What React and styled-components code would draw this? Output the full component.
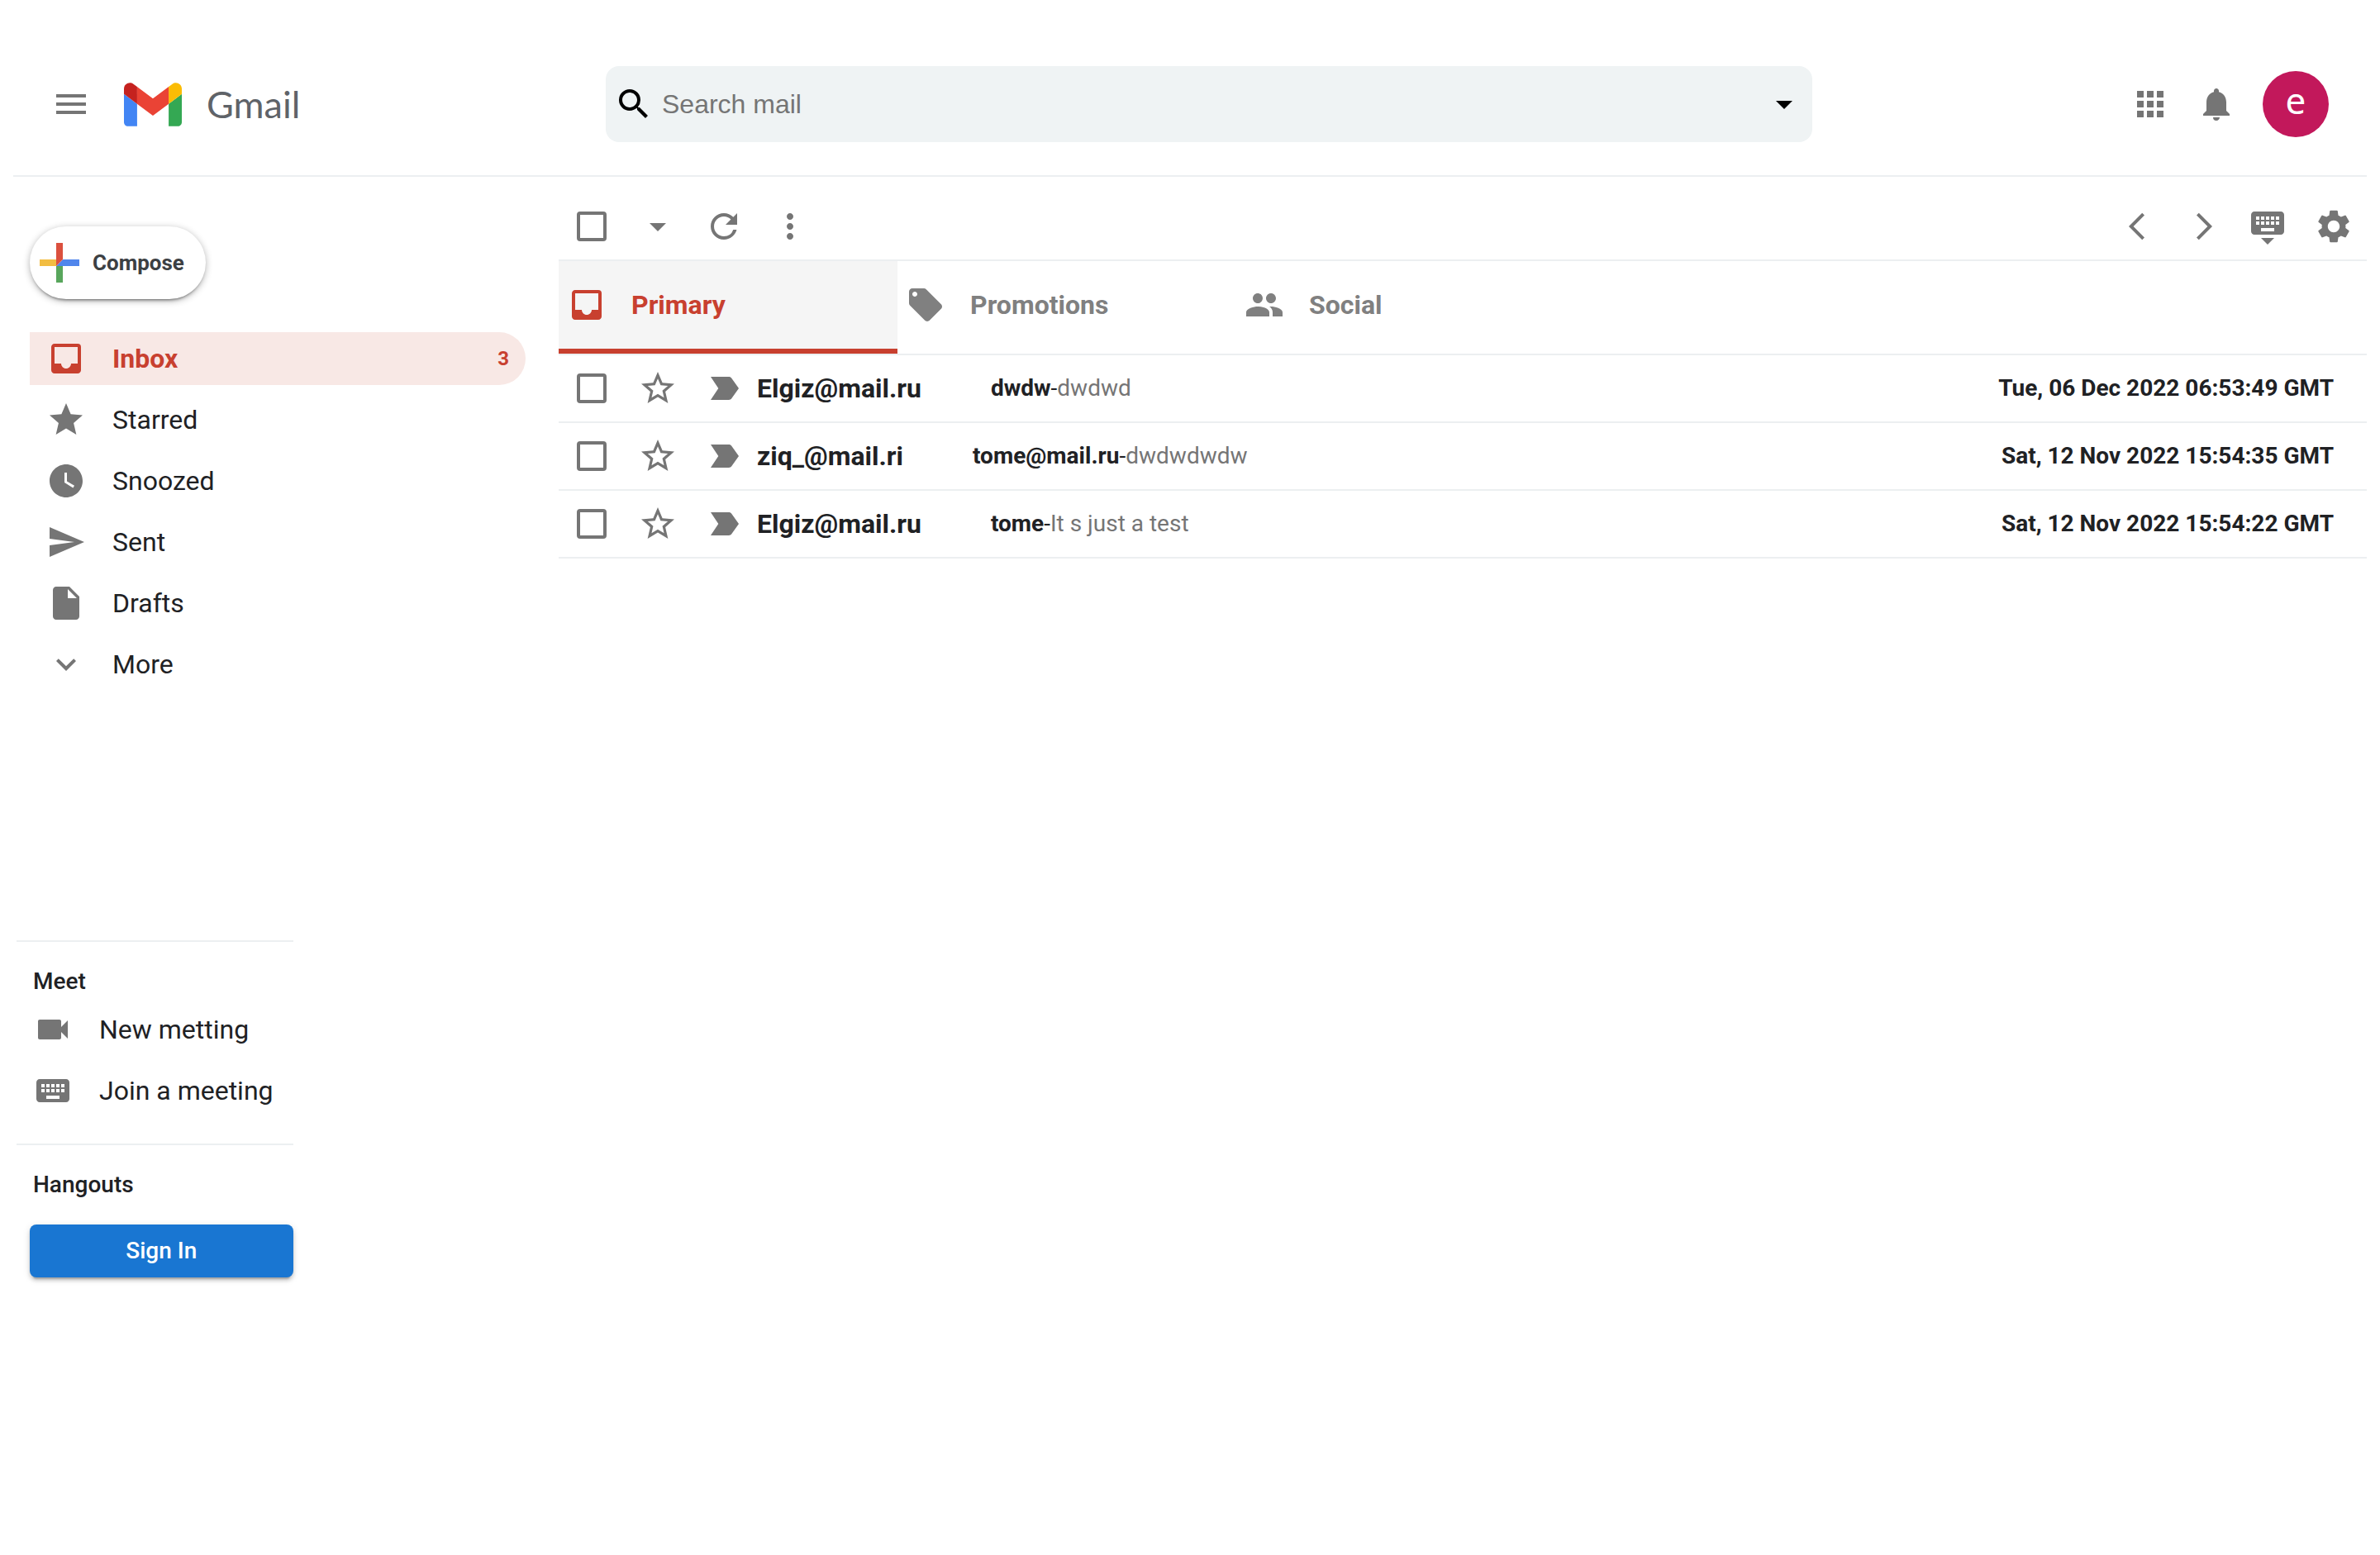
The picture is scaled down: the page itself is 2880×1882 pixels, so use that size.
import React from "react";
import styled, { createGlobalStyle } from "styled-components";
import {
  MdMenu, MdSearch, MdArrowDropDown, MdApps, MdNotifications, MdInbox, MdStar, MdWatchLater,
  MdSend, MdInsertDriveFile, MdExpandMore, MdVideocam, MdKeyboard, MdKeyboardHide, MdSettings,
  MdRefresh, MdMoreVert, MdLocalOffer, MdPeople, MdStarBorder,
} from "react-icons/md";

const red = "#c8402f";
const ink = "#202124";
const grey = "#757575";
const line = "#eceff1";

const GlobalStyle = createGlobalStyle`
  * { box-sizing: border-box; }
  body {
    margin: 0 16px;
    background: #fff;
    color: ${ink};
    font-family: Roboto, "Liberation Sans", sans-serif;
  }
  button, input { font-family: inherit; }
  svg { display: block; flex: none; }
`;

const Header = styled.header`
  display: flex;
  align-items: center;
  padding: 70px 30px 30px;
  border-bottom: 2px solid ${line};
`;

const Brand = styled.div`
  display: flex;
  align-items: center;
  flex: 0 0 318px;
`;

const Logo = styled.a`
  display: flex;
  align-items: center;
  gap: 30px;
  padding-left: 24px;
  color: #5f6368;
  font: 400 45px/52px Lato, sans-serif;
  text-decoration: none;
`;

const SearchBar = styled.form`
  display: flex;
  align-items: center;
  gap: 10px;
  flex: 1;
  min-width: 0;
  margin: 0 369px;
  padding: 22px 10px;
  border-radius: 16px;
  background: #eff3f4;
  color: #000;
`;

const SearchInput = styled.input`
  flex: 1;
  min-width: 0;
  padding: 0;
  border: none;
  outline: none;
  background: transparent;
  font: 400 32px/48px "Liberation Sans", Arial, sans-serif;
  &::placeholder { color: #757575; opacity: 1; }
`;

const BareButton = styled.button`
  display: flex;
  padding: 0;
  border: none;
  background: none;
  color: inherit;
  cursor: pointer;
`;

const IconButton = styled.button`
  display: flex;
  flex: none;
  padding: 16px;
  border: none;
  border-radius: 50%;
  background: none;
  color: ${grey};
  cursor: pointer;
`;

const HeaderActions = styled.div`
  display: flex;
  align-items: center;
`;

const Avatar = styled.span`
  display: flex;
  align-items: center;
  justify-content: center;
  width: 80px;
  height: 80px;
  padding-bottom: 10px;
  border-radius: 50%;
  background: #c2185b;
  color: #fff;
  font: 400 44px/44px "Noto Sans", sans-serif;
`;

const Body = styled.div`
  display: flex;
  align-items: flex-start;
`;

const Sidebar = styled.aside`
  flex: 0 0 660px;
  padding: 60px 40px 40px 0;
`;

const ComposeButton = styled.button`
  display: flex;
  align-items: center;
  gap: 16px;
  margin: 0 0 40px 20px;
  padding: 20px 26px 20px 12px;
  border: none;
  border-radius: 44px;
  background: #fff;
  color: #3c4043;
  font-size: 26px;
  font-weight: 700;
  line-height: 48px;
  box-shadow: 0 4px 4px -4px rgba(0, 0, 0, 0.75), 0 2px 8px 0 rgba(0, 0, 0, 0.3);
  cursor: pointer;
`;

const FolderList = styled.nav`
  display: flex;
  flex-direction: column;
  gap: 10px;
  padding-left: 20px;
`;

const Folder = styled.a`
  display: flex;
  align-items: center;
  gap: 32px;
  height: 64px;
  padding: 0 20px;
  border-radius: 0 32px 32px 0;
  background: ${(p) => (p.$active ? "#f8e8e5" : "transparent")};
  color: ${(p) => (p.$active ? red : ink)};
  font-size: 32px;
  font-weight: ${(p) => (p.$active ? 700 : 400)};
  line-height: 38px;
  text-decoration: none;
  svg { color: ${(p) => (p.$active ? red : grey)}; }
`;

const FolderCount = styled.span`
  margin-left: auto;
  font-size: 24px;
  line-height: 28px;
`;

const Widgets = styled.div`
  width: fit-content;
  margin: 302px 0 0 4px;
`;

const Widget = styled.section`
  padding-bottom: 32px;
  border-top: 2px solid ${line};
`;

const WidgetTitle = styled.h2`
  margin: 0;
  padding: 32px 20px 10px;
  font-size: 28px;
  font-weight: 500;
  line-height: 32px;
`;

const WidgetLinks = styled.div`
  display: flex;
  flex-direction: column;
  gap: 10px;
  padding-right: 4px;
`;

const SignInButton = styled.button`
  display: block;
  width: calc(100% - 16px);
  margin: 22px 0 0 16px;
  padding: 8px 20px;
  border: none;
  border-radius: 8px;
  background: #1976d2;
  color: #fff;
  font-size: 28px;
  font-weight: 500;
  line-height: 48px;
  box-shadow: 0 6px 2px -4px rgba(0, 0, 0, 0.2), 0 4px 4px 0 rgba(0, 0, 0, 0.14), 0 2px 10px 0 rgba(0, 0, 0, 0.12);
  cursor: pointer;
`;

const Main = styled.main`
  flex: 1;
  min-width: 0;
`;

const Toolbar = styled.div`
  display: flex;
  align-items: center;
  justify-content: space-between;
  padding-top: 20px;
  border-bottom: 2px solid ${line};
`;

const ToolGroup = styled.div`
  display: flex;
  align-items: center;
`;

const CheckLabel = styled.label`
  display: flex;
  flex: none;
  padding: 22px;
  cursor: pointer;
`;

const CheckInput = styled.input`
  appearance: none;
  width: 36px;
  height: 36px;
  margin: 0;
  border: 4px solid ${grey};
  border-radius: 4px;
  background: #fff;
  cursor: pointer;
  &:checked { background: ${grey}; }
`;

const Tabs = styled.div`
  display: flex;
  border-bottom: 2px solid ${line};
`;

const Tab = styled.button`
  display: flex;
  align-items: center;
  gap: 30px;
  width: 410px;
  height: 112px;
  padding: 0 10px;
  border: none;
  border-bottom: 6px solid ${(p) => (p.$active ? red : "transparent")};
  background: ${(p) => (p.$active ? "#f5f5f5" : "transparent")};
  color: ${(p) => (p.$active ? red : "#808080")};
  font-size: 32px;
  font-weight: 700;
  line-height: 38px;
  cursor: pointer;
`;

const MailRow = styled.article`
  display: flex;
  align-items: center;
  padding-right: 40px;
  border-bottom: 2px solid ${line};
`;

const Sender = styled.h3`
  margin: 0;
  font-size: 32px;
  font-weight: 700;
  line-height: 38px;
`;

const Message = styled.p`
  flex: 1;
  min-width: 0;
  margin: 0;
  padding-left: 84px;
  overflow: hidden;
  font-size: 28px;
  font-weight: 400;
  line-height: 32px;
  text-overflow: ellipsis;
  white-space: nowrap;
`;

const Subject = styled.strong`
  font-weight: 700;
`;

const Snippet = styled.span`
  color: ${grey};
`;

const Received = styled.time`
  font-size: 28px;
  font-weight: 700;
  line-height: 32px;
`;

const GmailMark = () => (
  <svg width="70" height="53" viewBox="52 42 88 66" aria-hidden="true">
    <path fill="#4285f4" d="M58 108h14V74L52 59v43c0 3.32 2.69 6 6 6" />
    <path fill="#34a853" d="M120 108h14c3.32 0 6-2.69 6-6V59l-20 15" />
    <path fill="#fbbc04" d="M120 48v26l20-15v-8c0-7.42-8.47-11.65-14.4-7.2" />
    <path fill="#ea4335" d="M72 74V48l24 18 24-18v26L96 92" />
    <path fill="#c5221f" d="M52 51v8l20 15V48l-5.6-4.2c-5.94-4.45-14.4-.22-14.4 7.2" />
  </svg>
);

const ComposePlus = () => (
  <svg width="48" height="48" viewBox="6 6 24 24" aria-hidden="true">
    <path fill="#58a65c" d="M16 20v10h4V20z" />
    <path fill="#5086ec" d="M30 16H20l-4 4h14z" />
    <path fill="#f2bd42" d="M6 16v4h10v-4z" />
    <path fill="#db503e" d="M20 16V6h-4v14z" />
  </svg>
);

const GlyphIcon = ({ d }) => (
  <svg width="48" height="48" viewBox="0 0 24 24" fill="currentColor" aria-hidden="true">
    <path d={d} />
  </svg>
);

const BACK = "M17.5 5.25L16.1 3.85L8 12L16.1 20.15L17.5 18.75L10.8 12z";
const NEXT = "M9 5.25L10.4 3.85L18.5 12L10.4 20.15L9 18.75L15.7 12z";
const IMPORTANT =
  "M4 18.99L15 19c.65 0 1.26-.31 1.63-.84L21 12l-4.37-6.16C16.26 5.31 15.65 5 15 5L4 5.01L8.66 12z";

const folders = [
  { name: "Inbox", Icon: MdInbox, count: 3 },
  { name: "Starred", Icon: MdStar },
  { name: "Snoozed", Icon: MdWatchLater },
  { name: "Sent", Icon: MdSend },
  { name: "Drafts", Icon: MdInsertDriveFile },
  { name: "More", Icon: MdExpandMore },
];

const meetLinks = [
  { name: "New metting", Icon: MdVideocam },
  { name: "Join a meeting", Icon: MdKeyboard },
];

const tabs = [
  { name: "Primary", Icon: MdInbox },
  { name: "Promotions", Icon: MdLocalOffer },
  { name: "Social", Icon: MdPeople },
];

const mails = [
  { from: "Elgiz@mail.ru", subject: "dwdw", text: "dwdwd", time: "Tue, 06 Dec 2022 06:53:49 GMT" },
  { from: "ziq_@mail.ri", subject: "tome@mail.ru", text: "dwdwdwdw", time: "Sat, 12 Nov 2022 15:54:35 GMT" },
  { from: "Elgiz@mail.ru", subject: "tome", text: "It s just a test", time: "Sat, 12 Nov 2022 15:54:22 GMT" },
];

const Check = ({ label }) => (
  <CheckLabel>
    <CheckInput type="checkbox" aria-label={label} />
  </CheckLabel>
);

const Action = ({ label, children }) => (
  <IconButton type="button" aria-label={label}>{children}</IconButton>
);

export default function App() {
  return (
    <>
      <GlobalStyle />
      <Header>
        <Brand>
          <Action label="Main menu"><MdMenu size={48} /></Action>
          <Logo href="#inbox"><GmailMark />Gmail</Logo>
        </Brand>
        <SearchBar role="search" onSubmit={(e) => e.preventDefault()}>
          <MdSearch size={48} />
          <SearchInput type="text" placeholder="Search mail" aria-label="Search mail" />
          <BareButton type="button" aria-label="Search options"><MdArrowDropDown size={48} /></BareButton>
        </SearchBar>
        <HeaderActions>
          <Action label="Apps"><MdApps size={48} /></Action>
          <Action label="Notifications"><MdNotifications size={48} /></Action>
          <Action label="Account"><Avatar>e</Avatar></Action>
        </HeaderActions>
      </Header>
      <Body>
        <Sidebar>
          <ComposeButton type="button"><ComposePlus />Compose</ComposeButton>
          <FolderList>
            {folders.map(({ name, Icon, count }) => (
              <Folder key={name} href={`#${name.toLowerCase()}`} $active={name === "Inbox"}>
                <Icon size={48} />
                {name}
                {count && <FolderCount>{count}</FolderCount>}
              </Folder>
            ))}
          </FolderList>
          <Widgets>
            <Widget>
              <WidgetTitle>Meet</WidgetTitle>
              <WidgetLinks>
                {meetLinks.map(({ name, Icon }) => (
                  <Folder key={name} href="#meet">
                    <Icon size={48} />
                    {name}
                  </Folder>
                ))}
              </WidgetLinks>
            </Widget>
            <Widget>
              <WidgetTitle>Hangouts</WidgetTitle>
              <SignInButton type="button">Sign In</SignInButton>
            </Widget>
          </Widgets>
        </Sidebar>
        <Main>
          <Toolbar>
            <ToolGroup>
              <Check label="Select all" />
              <Action label="Select options"><MdArrowDropDown size={48} /></Action>
              <Action label="Refresh"><MdRefresh size={48} /></Action>
              <Action label="More"><MdMoreVert size={48} /></Action>
            </ToolGroup>
            <ToolGroup>
              <Action label="Newer"><GlyphIcon d={BACK} /></Action>
              <Action label="Older"><GlyphIcon d={NEXT} /></Action>
              <Action label="Input tools"><MdKeyboardHide size={48} /></Action>
              <Action label="Settings"><MdSettings size={48} /></Action>
            </ToolGroup>
          </Toolbar>
          <Tabs role="tablist">
            {tabs.map(({ name, Icon }, i) => (
              <Tab key={name} type="button" role="tab" aria-selected={i === 0} $active={i === 0}>
                <Icon size={48} />
                {name}
              </Tab>
            ))}
          </Tabs>
          {mails.map((mail) => (
            <MailRow key={mail.time}>
              <Check label={`Select mail from ${mail.from}`} />
              <Action label="Star"><MdStarBorder size={48} /></Action>
              <Action label="Mark important"><GlyphIcon d={IMPORTANT} /></Action>
              <Sender>{mail.from}</Sender>
              <Message>
                <Subject>{mail.subject}</Subject>-<Snippet>{mail.text}</Snippet>
              </Message>
              <Received>{mail.time}</Received>
            </MailRow>
          ))}
        </Main>
      </Body>
    </>
  );
}
